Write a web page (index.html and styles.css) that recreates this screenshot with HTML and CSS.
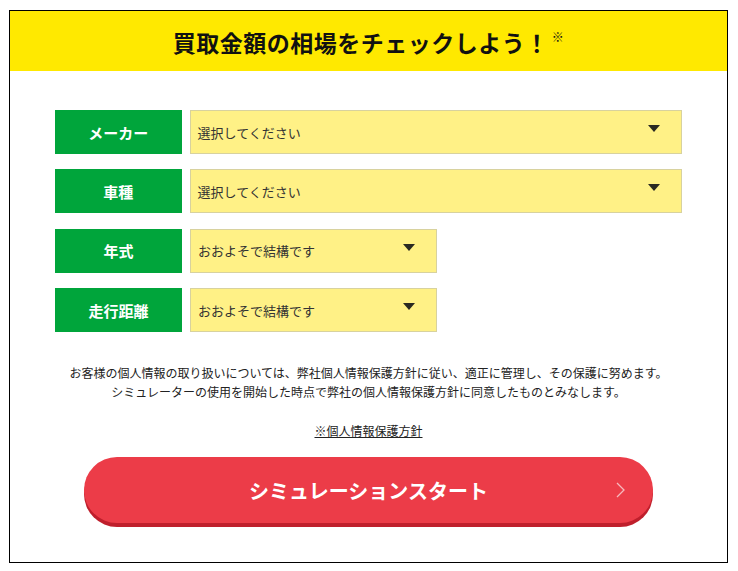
FILE: index.html
```html
<!DOCTYPE html>
<html lang="ja">
<head>
    <meta charset="UTF-8">
    <title>買取金額シミュレーター</title>
    <link rel="stylesheet" href="styles.css">
</head>
<body>
    <div class="sim-box">
        <div class="sim-header">
            <h1 class="sim-title">買取金額の相場をチェックしよう！<sup>※</sup></h1>
        </div>

        <div class="sim-body">
            <div class="sim-rows">
                <div class="sim-row">
                    <div class="sim-label">メーカー</div>
                    <div class="sim-select">
                        <span>選択してください</span>
                        <span class="arrow"></span>
                    </div>
                </div>
                <div class="sim-row">
                    <div class="sim-label">車種</div>
                    <div class="sim-select">
                        <span>選択してください</span>
                        <span class="arrow"></span>
                    </div>
                </div>
                <div class="sim-row">
                    <div class="sim-label">年式</div>
                    <div class="sim-select short">
                        <span>おおよそで結構です</span>
                        <span class="arrow"></span>
                    </div>
                </div>
                <div class="sim-row">
                    <div class="sim-label">走行距離</div>
                    <div class="sim-select short">
                        <span>おおよそで結構です</span>
                        <span class="arrow"></span>
                    </div>
                </div>
            </div>

            <p class="sim-note">
                お客様の個人情報の取り扱いについては、弊社個人情報保護方針に従い、適正に管理し、その保護に努めます。<br>
                シミュレーターの使用を開始した時点で弊社の個人情報保護方針に同意したものとみなします。
            </p>

            <p class="sim-policy"><a href="#">※個人情報保護方針</a></p>

            <a class="sim-btn" href="#">
                <span>シミュレーションスタート</span>
                <svg class="chev" width="9" height="16" viewBox="0 0 9 16">
                    <path d="M1 1 L8 8 L1 15" fill="none" stroke="#f6b9bd" stroke-width="1.3"/>
                </svg>
            </a>
        </div>
    </div>
</body>
</html>
```

FILE: styles.css
```css
* {
    margin: 0;
    padding: 0;
    box-sizing: border-box;
}

body {
    font-family: "Noto Sans CJK JP", "Noto Sans", sans-serif;
    background: #fff;
    color: #222;
}

.sim-box {
    margin: 10px 10px 0 9px;
    border: 1px solid #000;
    height: 553px;
}

/* ヘッダー */
.sim-header {
    background: #ffe900;
    height: 60px;
    display: flex;
    align-items: center;
    justify-content: center;
    padding-top: 1px;
}

.sim-title {
    font-size: 23px;
    font-weight: bold;
    color: #111;
    letter-spacing: 0.5px;
}

.sim-title sup {
    font-size: 12px;
    font-weight: normal;
    vertical-align: 10px;
    margin-left: 3px;
}

.sim-body {
    padding: 39px 45px 0;
}

/* 入力行 */
.sim-rows {
    display: flex;
    flex-direction: column;
    gap: 15.4px;
}

.sim-row {
    display: flex;
    gap: 8px;
    height: 44px;
}

.sim-label {
    width: 127px;
    background: #00a53b;
    color: #fff;
    font-size: 15px;
    font-weight: bold;
    display: flex;
    align-items: center;
    justify-content: center;
}

.sim-select {
    position: relative;
    width: 494px;
    background: #fff186;
    border: 1px solid #d8d29e;
    display: flex;
    align-items: center;
    padding-left: 7px;
    font-size: 13px;
    color: #333;
}

.sim-select.short {
    width: 247px;
}

.sim-select .arrow {
    position: absolute;
    right: 21px;
    top: 14px;
    width: 0;
    height: 0;
    border-left: 6px solid transparent;
    border-right: 6px solid transparent;
    border-top: 7px solid #2a2a22;
}

/* 注意書き */
.sim-note {
    margin-top: 31px;
    font-size: 12px;
    line-height: 19px;
    text-align: center;
    color: #222;
    white-space: nowrap;
    margin-left: -20px;
    margin-right: -20px;
}

.sim-policy {
    margin-top: 20px;
    font-size: 12px;
    line-height: 19px;
    text-align: center;
}

.sim-policy a {
    color: #222;
    text-decoration: underline;
}

/* ボタン */
.sim-btn {
    position: relative;
    display: flex;
    align-items: center;
    justify-content: center;
    margin: 17px 29px 0 29px;
    height: 66px;
    border-radius: 33px;
    background: #ec3c48;
    box-shadow: 0 4px 0 #bf1f2c;
    color: #fff;
    font-size: 20px;
    font-weight: bold;
    text-decoration: none;
}

.sim-btn .chev {
    position: absolute;
    right: 28px;
    top: 25px;
}
```
